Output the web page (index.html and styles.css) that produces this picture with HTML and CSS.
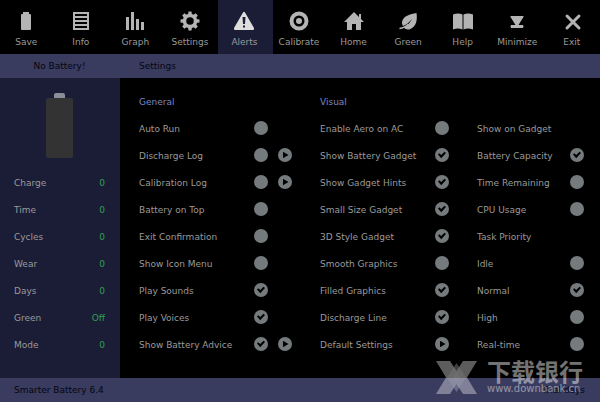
FILE: index.html
```
<!DOCTYPE html>
<html lang="en">
<head>
<meta charset="utf-8">
<title>Smarter Battery</title>
<link rel="stylesheet" href="styles.css">
</head>
<body>
<div class="app">
  <nav class="toolbar">
    <button class="tool"><svg viewBox="0 0 24 24"><path d="M9 3h6v2h1q1 0 1 1v14q0 1-1 1H8q-1 0-1-1V6q0-1 1-1h1z"/></svg>Save</button>
    <button class="tool"><svg viewBox="0 0 24 24"><path fill-rule="evenodd" d="M4 3h16v18H4zM6 5v2h12V5zM6 9v2h12V9zM6 13v2h12v-2zM6 17v2h12v-2z"/></svg>Info</button>
    <button class="tool"><svg viewBox="0 0 24 24"><path d="M3 8h3v13H3zM8 3h3v18H8zM13 10h3v11h-3zM18 13h3v8h-3z"/></svg>Graph</button>
    <button class="tool"><svg viewBox="0 0 24 24"><circle cx="12" cy="12" r="5.500" fill="none" stroke="currentColor" stroke-width="3.500"/><path d="M10.500 2.500h3l.5 4h-4zM10.500 21.500h3l.5-4h-4zM2.500 10.500v3l4 .5v-4zM21.500 10.500v3l-4 .5v-4zM4.200 6.400l2.200-2.200L9.500 6.500l-3 3zM17.600 4.200l2.200 2.200-2.300 3.100-3-3zM19.800 17.600l-2.200 2.200-3.100-2.300 3-3zM6.400 19.800l-2.200-2.200 2.300-3.100 3 3z"/></svg>Settings</button>
    <button class="tool tool-active"><svg viewBox="0 0 24 24"><path fill-rule="evenodd" d="M11 3.500q1-1.500 2 0l9 15.500q.5 2-1 2H3q-1.500 0-1-2zM10.500 8l.5 7h2l.5-7zM11 16.500v2h2v-2z"/></svg>Alerts</button>
    <button class="tool"><svg viewBox="0 0 24 24"><circle cx="12" cy="12" r="7.500" fill="none" stroke="currentColor" stroke-width="4"/><circle cx="12" cy="12" r="3"/></svg>Calibrate</button>
    <button class="tool"><svg viewBox="0 0 24 24"><path d="M12 3l5 5V5h2v5l3 3h-3v8h-5v-6h-4v6H5v-8H2z"/></svg>Home</button>
    <button class="tool"><svg viewBox="0 0 24 24"><path d="M20.500 4C14 5 7 7 6 13q-.3 2 1 4c3-1 6-3.500 9-7-2 4-5 7-8.500 8.500q3 3 7 1.500C20.500 17 21.500 11 20.500 4z"/><path d="M3.500 19.500q5-.5 9-4.500" fill="none" stroke="currentColor" stroke-width="1.500"/></svg>Green</button>
    <button class="tool"><svg viewBox="0 0 24 24"><path d="M2 5.500q5-2 9.500 0v15q-4.500-2-9.500 0zM12.500 5.500q4.500-2 9.500 0v15q-5-2-9.500 0z"/></svg>Help</button>
    <button class="tool"><svg viewBox="0 0 24 24"><path d="M5.500 7h13v1L13.500 16H18q1 1.500 0 3H6q-1-1.500 0-3h4.500L5.500 8z"/></svg>Minimize</button>
    <button class="tool"><svg viewBox="0 0 24 24"><path d="M7 7l12 12M19 7L7 19" fill="none" stroke="currentColor" stroke-width="3" stroke-linecap="round"/></svg>Exit</button>
  </nav>
  <header class="bar heading"><span class="status">No Battery!</span><span class="page-name">Settings</span></header>
  <div class="body">
    <aside class="sidebar">
      <div class="battery"></div>
      <dl class="stats">
        <div class="stat"><dt>Charge</dt><dd>0</dd></div>
        <div class="stat"><dt>Time</dt><dd>0</dd></div>
        <div class="stat"><dt>Cycles</dt><dd>0</dd></div>
        <div class="stat"><dt>Wear</dt><dd>0</dd></div>
        <div class="stat"><dt>Days</dt><dd>0</dd></div>
        <div class="stat"><dt>Green</dt><dd>Off</dd></div>
        <div class="stat"><dt>Mode</dt><dd>0</dd></div>
      </dl>
    </aside>
    <main class="settings">
      <section class="group group-wide">
        <h2 class="title">General</h2>
        <div class="row"><label for="auto">Auto Run</label><input type="checkbox" id="auto"></div>
        <div class="row"><label for="dlog">Discharge Log</label><input type="checkbox" id="dlog"><button class="play" aria-label="Open"></button></div>
        <div class="row"><label for="clog">Calibration Log</label><input type="checkbox" id="clog"><button class="play" aria-label="Open"></button></div>
        <div class="row"><label for="top">Battery on Top</label><input type="checkbox" id="top"></div>
        <div class="row"><label for="exitc">Exit Confirmation</label><input type="checkbox" id="exitc"></div>
        <div class="row"><label for="menu">Show Icon Menu</label><input type="checkbox" id="menu"></div>
        <div class="row"><label for="sounds">Play Sounds</label><input type="checkbox" id="sounds" checked></div>
        <div class="row"><label for="voices">Play Voices</label><input type="checkbox" id="voices" checked></div>
        <div class="row"><label for="advice">Show Battery Advice</label><input type="checkbox" id="advice" checked><button class="play" aria-label="Open"></button></div>
      </section>
      <section class="group">
        <h2 class="title">Visual</h2>
        <div class="row"><label for="aero">Enable Aero on AC</label><input type="checkbox" id="aero"></div>
        <div class="row"><label for="gadget">Show Battery Gadget</label><input type="checkbox" id="gadget" checked></div>
        <div class="row"><label for="hints">Show Gadget Hints</label><input type="checkbox" id="hints" checked></div>
        <div class="row"><label for="small">Small Size Gadget</label><input type="checkbox" id="small" checked></div>
        <div class="row"><label for="style3d">3D Style Gadget</label><input type="checkbox" id="style3d" checked></div>
        <div class="row"><label for="smooth">Smooth Graphics</label><input type="checkbox" id="smooth"></div>
        <div class="row"><label for="filled">Filled Graphics</label><input type="checkbox" id="filled" checked></div>
        <div class="row"><label for="line">Discharge Line</label><input type="checkbox" id="line" checked></div>
        <div class="row"><label for="defaults">Default Settings</label><button class="play" id="defaults"></button></div>
      </section>
      <section class="group group-last">
        <h3 class="row">Show on Gadget</h3>
        <div class="row"><label for="capacity">Battery Capacity</label><input type="checkbox" id="capacity" checked></div>
        <div class="row"><label for="remaining">Time Remaining</label><input type="checkbox" id="remaining"></div>
        <div class="row"><label for="cpu">CPU Usage</label><input type="checkbox" id="cpu"></div>
        <h3 class="row">Task Priority</h3>
        <div class="row"><label for="idle">Idle</label><input type="radio" name="priority" id="idle"></div>
        <div class="row"><label for="normal">Normal</label><input type="radio" name="priority" id="normal" checked></div>
        <div class="row"><label for="high">High</label><input type="radio" name="priority" id="high"></div>
        <div class="row"><label for="realtime">Real-time</label><input type="radio" name="priority" id="realtime"></div>
      </section>
    </main>
  </div>
  <footer class="bar footer"><span>Smarter Battery 6.4</span><span>Trial days</span></footer>
  <div class="mark">
    <svg class="mark-logo" viewBox="0 0 41 33"><path d="M0 0h14l6.500 10L27 0h14L31 16.500 41 33H27l-6.500-10L14 33H0l10-16.500z" fill-opacity=".8"/><path d="M20.500 2L30 16.500 20.500 31 11 16.500z" fill-opacity=".55"/><path d="M20.500 11l4 5.500-4 5.500-4-5.500z" fill-opacity=".5"/></svg>
    <div class="mark-text"><span class="mark-name" lang="zh">下载银行</span><span class="mark-url">www.downbank.cn</span></div>
  </div>
</div>
</body>
</html>
```
FILE: styles.css
```
* {
  box-sizing: border-box;
}

body {
  margin: 0;
  background: #000;
  color: #9a9a9a;
  font: 9px/14px "DejaVu Sans", Verdana, sans-serif;
}

h2, h3, dl, dd {
  margin: 0;
  font: inherit;
}

button {
  border: 0;
  padding: 0;
  background: none;
  color: inherit;
  font: inherit;
}

.app {
  position: relative;
  min-height: 100vh;
  display: flex;
  flex-direction: column;
}

.toolbar {
  display: grid;
  grid-template-columns: repeat(11, 1fr);
}

.tool {
  display: flex;
  flex-direction: column;
  align-items: center;
  gap: 2px;
  padding: 9px 2px 5px 0;
}

.tool svg {
  width: 24px;
  height: 24px;
  fill: currentColor;
  color: #b4b4b4;
}

.tool-active {
  background: #1b1c36;
}

.tool-active svg {
  color: #dedede;
}

.bar {
  display: flex;
  align-items: center;
  height: 24px;
  background: #393b5f;
  color: #05060f;
}

.status {
  width: 20%;
  padding-right: 1px;
  text-align: center;
}

.page-name {
  padding-left: 19px;
}

.body {
  flex: 1;
  display: grid;
  grid-template-columns: 1fr 4fr;
}

.sidebar {
  padding: 15px 15px 20px 14px;
  background: #1b1c36;
}

.battery {
  width: 27px;
  height: 60px;
  margin: 5px auto 18px;
  border-radius: 2px;
  background: #333;
}

.battery::before {
  content: "";
  display: block;
  width: 11px;
  height: 5px;
  margin: 0 auto;
  border-radius: 2px 2px 0 0;
  background: #8b8d9b;
  transform: translateY(-5px);
}

.stats {
  display: grid;
  gap: 13px;
}

.stat {
  display: flex;
  justify-content: space-between;
}

.stat dd {
  color: #2fa050;
}

.settings {
  display: grid;
  grid-template-columns: 153fr 129fr 107fr;
  column-gap: 28px;
  padding: 16px 16px 20px 19px;
}

.group {
  display: grid;
  align-content: start;
  gap: 13px;
}

.group-last {
  padding-top: 27px;
}

.title, .row {
  height: 14px;
  line-height: 16px;
}

.title {
  color: #7d87c0;
}

.row {
  display: grid;
  grid-template-columns: 1fr 14px;
  column-gap: 10px;
  white-space: nowrap;
}

.group-wide .row {
  grid-template-columns: 1fr 14px 14px;
}

input, .play {
  appearance: none;
  display: grid;
  place-items: center;
  width: 14px;
  height: 14px;
  margin: 0;
  border-radius: 50%;
  background: #757a7d;
}

input:checked::before {
  content: "";
  width: 8px;
  height: 8px;
  background: #000;
  clip-path: polygon(0 45%, 16% 27%, 40% 50%, 82% 8%, 100% 26%, 40% 90%);
}

.play::before {
  content: "";
  width: 6px;
  height: 7px;
  margin-left: 1px;
  background: #000;
  clip-path: polygon(0 0, 100% 50%, 0 100%);
}

.footer {
  justify-content: space-between;
  padding: 0 15px 0 14px;
}

.mark {
  position: absolute;
  right: 17px;
  bottom: 7px;
  display: flex;
  align-items: center;
  gap: 10px;
  color: #fff;
  opacity: 0.45;
  pointer-events: none;
}

.mark-logo {
  width: 41px;
  height: 33px;
  fill: #fff;
}

.mark-text {
  display: flex;
  flex-direction: column;
}

.mark-name {
  font: bold 24px/24px "Noto Sans CJK SC", sans-serif;
}

.mark-url {
  font: 10px/12px "DejaVu Sans", sans-serif;
}
```
